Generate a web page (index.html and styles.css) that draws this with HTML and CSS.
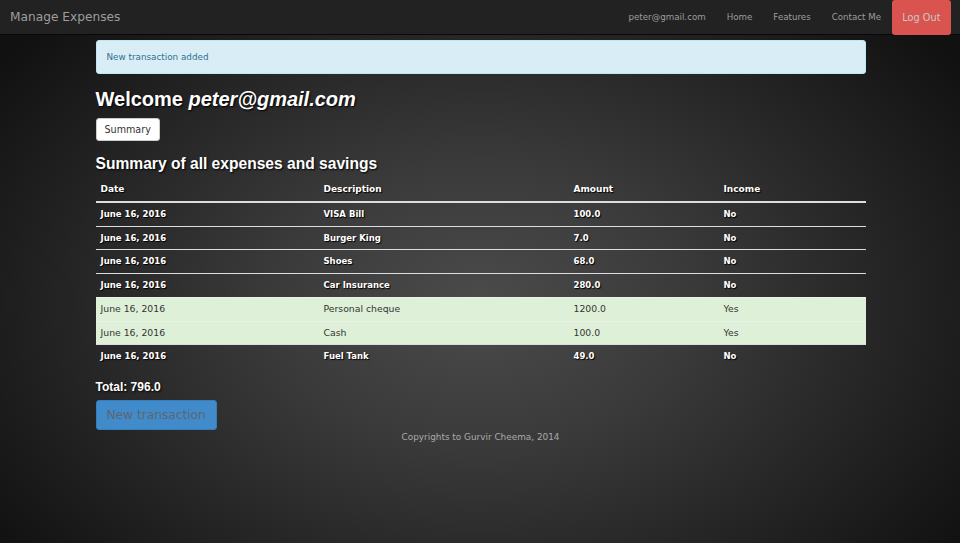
FILE: index.html
```html
<!DOCTYPE html>
<html>
<head>
<meta charset="utf-8">
<title>Manage Expenses</title>
<link rel="stylesheet" href="styles.css">
</head>
<body>
<nav class="navbar">
  <a class="brand" href="#">Manage Expenses</a>
  <ul class="nav">
    <li><a href="#">peter@gmail.com</a></li>
    <li><a href="#">Home</a></li>
    <li><a href="#">Features</a></li>
    <li><a href="#">Contact Me</a></li>
    <li><a class="logout" href="#">Log Out</a></li>
  </ul>
</nav>
<main class="container">
  <div class="alert">New transaction added</div>
  <h1 class="welcome">Welcome <em>peter@gmail.com</em></h1>
  <button class="btn-default">Summary</button>
  <h2 class="summary-title">Summary of all expenses and savings</h2>
  <table class="table">
    <thead>
      <tr><th class="c-date">Date</th><th class="c-desc">Description</th><th class="c-amt">Amount</th><th>Income</th></tr>
    </thead>
    <tbody>
      <tr><td>June 16, 2016</td><td>VISA Bill</td><td>100.0</td><td>No</td></tr>
      <tr><td>June 16, 2016</td><td>Burger King</td><td>7.0</td><td>No</td></tr>
      <tr><td>June 16, 2016</td><td>Shoes</td><td>68.0</td><td>No</td></tr>
      <tr><td>June 16, 2016</td><td>Car Insurance</td><td>280.0</td><td>No</td></tr>
      <tr class="success"><td>June 16, 2016</td><td>Personal cheque</td><td>1200.0</td><td>Yes</td></tr>
      <tr class="success"><td>June 16, 2016</td><td>Cash</td><td>100.0</td><td>Yes</td></tr>
      <tr><td>June 16, 2016</td><td>Fuel Tank</td><td>49.0</td><td>No</td></tr>
    </tbody>
  </table>
  <h3 class="total">Total: 796.0</h3>
  <button class="btn-primary">New transaction</button>
  <footer class="footer">Copyrights to Gurvir Cheema, 2014</footer>
</main>
</body>
</html>
```
FILE: styles.css
```css
html, body {
  margin: 0;
  padding: 0;
  height: 100%;
}
body {
  font-family: "DejaVu Sans", Verdana, sans-serif;
  font-size: 10px;
  color: #fff;
  background: radial-gradient(ellipse 62% 75% at 50% 56%, #4b4b4b 0%, #3a3a3a 35%, #242424 70%, #111 100%);
  background-color: #1a1a1a;
  min-height: 543px;
}
.navbar {
  height: 35px;
  background: #222;
  border-bottom: 1px solid #080808;
  display: flex;
  align-items: center;
  justify-content: space-between;
  box-sizing: border-box;
}
.brand {
  color: #9d9d9d;
  text-decoration: none;
  font-size: 12.2px;
  padding-left: 10px;
}
.nav {
  list-style: none;
  margin: 0;
  padding: 0 9px 0 0;
  display: flex;
  align-items: stretch;
  height: 35px;
}
.nav li {
  display: flex;
}
.nav a {
  color: #9d9d9d;
  text-decoration: none;
  font-size: 8.7px;
  display: flex;
  align-items: center;
  padding: 0 10.5px;
}
.nav a.logout {
  background: #d9534f;
  color: #c9c9c9;
  border-radius: 3px;
  padding: 0 10.5px;
  font-size: 9.8px;
}
.container {
  width: 770px;
  margin: 0 auto;
  padding: 5px 0 0 1px;
}
.alert {
  background: #d9edf7;
  border: 1px solid #bce8f1;
  color: #31708f;
  border-radius: 3px;
  height: 34px;
  box-sizing: border-box;
  padding: 0 10px;
  display: flex;
  align-items: center;
  font-size: 8.8px;
}
.welcome {
  font-family: "Liberation Sans", Arial, sans-serif;
  font-size: 20px;
  font-weight: bold;
  margin: 13px 0 7px;
  line-height: 24px;
  text-shadow: 1px 1px 2px #000;
}
.welcome em {
  font-style: italic;
}
.btn-default {
  background: #fff;
  border: 1px solid #ccc;
  border-radius: 3px;
  color: #333;
  font-family: "DejaVu Sans", Verdana, sans-serif;
  font-size: 9.6px;
  height: 23px;
  padding: 0 8px;
  display: block;
}
.summary-title {
  font-family: "Liberation Sans", Arial, sans-serif;
  font-size: 15.6px;
  font-weight: bold;
  margin: 12px 0 6px;
  line-height: 22px;
  text-shadow: 1px 1px 2px #000;
}
.table {
  width: 770px;
  border-collapse: collapse;
  table-layout: fixed;
  font-weight: bold;
  text-shadow: 1px 1px 1px #000;
}
.table th, .table td {
  box-sizing: border-box;
}
.table th {
  text-align: left;
  padding: 2px 5px 5px;
  line-height: 13px;
  border-bottom: 2px solid #ddd;
  font-size: 9px;
}
.c-date { width: 223px; }
.c-desc { width: 250px; }
.c-amt { width: 150px; }
.table td {
  padding: 4px 5px;
  line-height: 14.7px;
  border-top: 1px solid #ddd;
  font-size: 8.5px;
}
.table tbody tr:first-child td {
  border-top: 0;
}
.table tr.success td {
  background: #dff0d8;
  color: #333;
  font-weight: normal;
  text-shadow: none;
  font-size: 9.3px;
  border-top-color: #e9f3e4;
}
.total {
  font-family: "Liberation Sans", Arial, sans-serif;
  font-size: 12px;
  font-weight: bold;
  margin: 11px 0 5px;
  line-height: 16px;
  text-shadow: 1px 1px 2px #000;
}
.btn-primary {
  background: #428bca;
  border: 1px solid #357ebd;
  border-radius: 3px;
  color: #5c6670;
  font-family: "DejaVu Sans", Verdana, sans-serif;
  font-size: 12.2px;
  height: 30px;
  padding: 0 10px;
  display: block;
}
.footer {
  text-align: center;
  color: #aaa;
  font-size: 8.9px;
  margin-top: 2px;
}
```
